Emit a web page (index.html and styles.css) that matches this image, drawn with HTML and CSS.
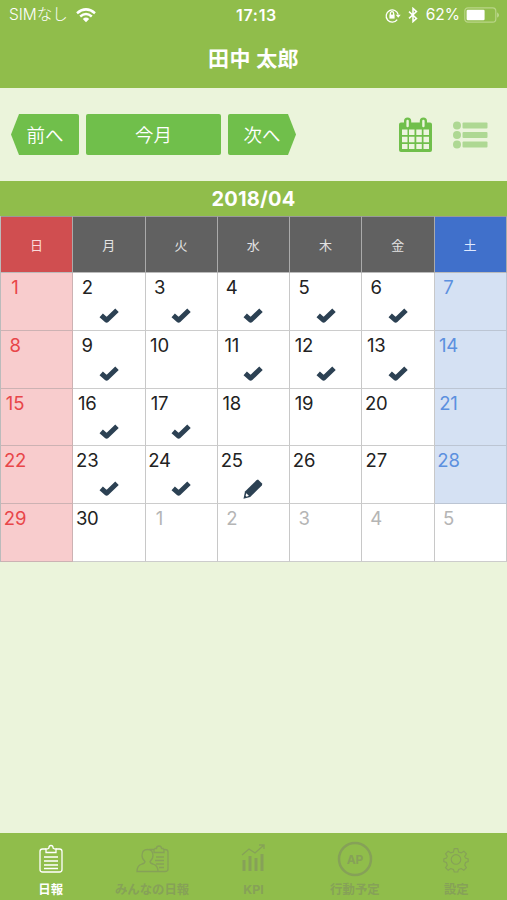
FILE: index.html
```html
<!DOCTYPE html>
<html lang="ja">
<head>
<meta charset="utf-8">
<title>日報</title>
<link rel="stylesheet" href="styles.css">
</head>
<body>
<svg class="defs" width="0" height="0">
  <symbol id="check" viewBox="0 0 20 16"><path d="M2.2 8.300 7.600 13.200 18 3.200" fill="none" stroke="#2c4153" stroke-width="5" stroke-linejoin="round"/></symbol>
  <symbol id="pencil" viewBox="0 0 20 20"><path fill="#2c4153" d="M13.400 1.300 15 .6 19.300 4.800 18.800 6.600 7.200 18.100.5 19.800 2 12.500Z"/><path fill="#fff" d="m3.300 14.300 2.600 2.500-2.300.9-1-1Z"/></symbol>
</svg>
<div class="app">
  <header class="header">
    <div class="status">
      <div class="carrier"><span>SIMなし</span>
        <svg width="20" height="15" viewBox="0 0 20 15" fill="none" stroke="#fff" stroke-width="2.500"><path d="M1 5.200Q10-2.400 19 5.200M4.200 8.500Q10 3.600 15.800 8.500"/><path d="M6.800 10.900Q10 8.300 13.200 10.900L10 14.200Z" fill="#fff" stroke="none"/></svg>
      </div>
      <div class="time">17:13</div>
      <div class="indicators">
        <svg width="16" height="15" viewBox="0 0 16 15" fill="none" stroke="#fff" stroke-width="1.300"><path d="M12.200 11.600A6.100 6.100 0 1 1 13.200 6.600"/><path d="M10.700 6.700h5l-2.500 3.100Z" fill="#fff" stroke="none"/><path d="M4.400 6.600h5.200v4H4.400Z" fill="#fff" stroke="none"/><path d="M5.400 7V5.300a1.600 1.600 0 0 1 3.200 0V7"/></svg>
        <svg class="bluetooth" width="10" height="16" viewBox="0 0 10 16" fill="none" stroke="#fff" stroke-width="1.500"><path d="m1 4.600 7.500 6.800L5 14.600V1.400l3.500 3.200L1 11.400"/></svg>
        <span>62%</span>
        <svg class="battery" width="36" height="16" viewBox="0 0 36 16"><rect x=".8" y=".8" width="31" height="14.400" rx="3.200" fill="none" stroke="#b9d588" stroke-width="1.200"/><rect x="2.600" y="2.800" width="18" height="10.400" rx="1.200" fill="#fff"/><path d="M33.300 5.200q3 2.800 0 5.600Z" fill="#c9dfa2"/></svg>
      </div>
    </div>
    <h1 class="title">田中 太郎</h1>
  </header>
  <div class="toolbar">
    <button class="button prev">前へ</button>
    <button class="button current">今月</button>
    <button class="button next">次へ</button>
    <svg class="calendar-icon" width="33" height="35" viewBox="0 0 33 35"><path fill="#70bf4b" fill-rule="evenodd" d="M2 5.500h3V4a3.600 3.600 0 0 1 7.200 0v1.500h8.600V4A3.600 3.600 0 0 1 28 4v1.500h3q2 0 2 2V33q0 2-2 2H2q-2 0-2-2V7.500q0-2 2-2Z"/><g stroke="#edf5de" stroke-width="2.400" stroke-linecap="round"><path d="M8.600 4v5M24.400 4v5"/></g><path fill="#edf5de" d="M3 12.500h5.500v5.500H3zM10 12.500h5.500v5.500H10zM17.300 12.500h5.500v5.500h-5.500zM24.500 12.500H30v5.500h-5.500zM3 19.800h5.500v5.500H3zM10 19.800h5.500v5.500H10zM17.300 19.800h5.500v5.500h-5.500zM24.500 19.800H30v5.500h-5.500zM3 27h5.500v5H3zM10 27h5.500v5H10zM17.300 27h5.500v5h-5.500zM24.500 27H30v5h-5.500z"/></svg>
    <svg class="list-icon" width="35" height="28" viewBox="0 0 35 28" fill="#aed893"><circle cx="4" cy="4.500" r="4"/><circle cx="4" cy="14" r="4"/><circle cx="4" cy="23.500" r="4"/><rect x="9.500" y="1.500" width="25" height="6" rx="1"/><rect x="9.500" y="11" width="25" height="6" rx="1"/><rect x="9.500" y="20.500" width="25" height="6" rx="1"/></svg>
  </div>
  <div class="month">2018/04</div>
  <div class="calendar">
    <div class="day sun">日</div><div class="day">月</div><div class="day">火</div><div class="day">水</div><div class="day">木</div><div class="day">金</div><div class="day sat">土</div>
    <div class="cell sun"><span>1</span></div>
    <div class="cell"><span>2</span><svg class="check"><use href="#check"/></svg></div>
    <div class="cell"><span>3</span><svg class="check"><use href="#check"/></svg></div>
    <div class="cell"><span>4</span><svg class="check"><use href="#check"/></svg></div>
    <div class="cell"><span>5</span><svg class="check"><use href="#check"/></svg></div>
    <div class="cell"><span>6</span><svg class="check"><use href="#check"/></svg></div>
    <div class="cell sat"><span>7</span></div>
    <div class="cell sun"><span>8</span></div>
    <div class="cell"><span>9</span><svg class="check"><use href="#check"/></svg></div>
    <div class="cell"><span>10</span></div>
    <div class="cell"><span>11</span><svg class="check"><use href="#check"/></svg></div>
    <div class="cell"><span>12</span><svg class="check"><use href="#check"/></svg></div>
    <div class="cell"><span>13</span><svg class="check"><use href="#check"/></svg></div>
    <div class="cell sat"><span>14</span></div>
    <div class="cell sun"><span>15</span></div>
    <div class="cell"><span>16</span><svg class="check"><use href="#check"/></svg></div>
    <div class="cell"><span>17</span><svg class="check"><use href="#check"/></svg></div>
    <div class="cell"><span>18</span></div>
    <div class="cell"><span>19</span></div>
    <div class="cell"><span>20</span></div>
    <div class="cell sat"><span>21</span></div>
    <div class="cell sun"><span>22</span></div>
    <div class="cell"><span>23</span><svg class="check"><use href="#check"/></svg></div>
    <div class="cell"><span>24</span><svg class="check"><use href="#check"/></svg></div>
    <div class="cell"><span>25</span><svg class="pencil"><use href="#pencil"/></svg></div>
    <div class="cell"><span>26</span></div>
    <div class="cell"><span>27</span></div>
    <div class="cell sat"><span>28</span></div>
    <div class="cell sun"><span>29</span></div>
    <div class="cell"><span>30</span></div>
    <div class="cell other"><span>1</span></div>
    <div class="cell other"><span>2</span></div>
    <div class="cell other"><span>3</span></div>
    <div class="cell other"><span>4</span></div>
    <div class="cell other"><span>5</span></div>
  </div>
  <nav class="tabs">
    <div class="tab active">
      <svg width="36" height="36" viewBox="0 0 36 36"><path d="M13 8h-3.500Q7 8 7 10.500v18Q7 31 9.500 31h17q2.500 0 2.500-2.500v-18Q29 8 26.500 8H23"/><path d="M13 11.500V8q3 0 3-1.500a2 2 0 0 1 4 0Q20 8 23 8v3.500ZM11 16h14M11 20h14M11 24h14M11 27.500h14"/></svg>
      <span>日報</span>
    </div>
    <div class="tab">
      <svg width="36" height="36" viewBox="0 0 36 36"><path d="M15 8.500h4q1.500 0 2-1h1.500q0-2.500 2.500-2.500t2.500 2.500H29q0 1 2 1 3 0 3 2.500v17q0 2.500-3 2.500H3q0-6 5-7.500 3-.7 3-2.500-3-2.500-3-6 0-6 5.500-6T19 14.500q0 3.500-3 6 0 1.800 3 2.500 5 1.500 5 7.500"/><path d="M20 8.500v3h10v-3M22 16h8M21 19.500h9M22 23h8M25 26.500h5"/></svg>
      <span>みんなの日報</span>
    </div>
    <div class="tab">
      <svg width="36" height="36" viewBox="0 0 36 36"><path class="bars" d="M9 30V19M15 30V15M21 30V17M27 30V13"/><path d="m7 14 7-6 6 4 9-8m-5 0h5v4"/></svg>
      <span>KPI</span>
    </div>
    <div class="tab">
      <svg width="36" height="36" viewBox="0 0 36 36"><circle class="ring" cx="18" cy="18" r="16"/><text x="18" y="22.500" text-anchor="middle">AP</text></svg>
      <span>行動予定</span>
    </div>
    <div class="tab">
      <svg class="gear" width="36" height="36" viewBox="0 0 36 36"><path d="m16 6 4 0 1 4 3 1 3-2 3 3-2 3 1 2 3 1v3l-3 1-1 3 2 3-3 3-3-2-3 1-1 3h-4l-1-3-3-1-3 2-3-3 2-3-1-3-3-1v-3l3-1 1-2-2-3 3-3 3 2 3-1Z"/><circle cx="18" cy="18.500" r="5.500"/></svg>
      <span>設定</span>
    </div>
  </nav>
</div>
</body>
</html>
```
FILE: styles.css
```css
* { box-sizing: border-box; }
body { margin: 0; font-family: Inter, "Noto Sans CJK JP", sans-serif; }
.defs { display: block; height: 0; }
.app { width: 507px; height: 900px; display: flex; flex-direction: column; background: #ebf4db; overflow: hidden; }
.header { height: 88px; flex: none; background: #90bd4b; color: #fff; }
.status { height: 30px; display: grid; grid-template-columns: 1fr 60px 1fr; align-items: center; font-size: 16px; line-height: 30px; }
.status svg { display: block; flex: none; }
.carrier { display: flex; align-items: center; gap: 9px; padding-left: 9px; font-weight: 300; }
.carrier span { width: 58px; white-space: nowrap; font-size: 15.5px; }
.time { text-align: center; font-weight: 600; font-size: 16px; letter-spacing: .7px; padding-left: 6px; }
.indicators { display: flex; align-items: center; justify-content: flex-end; padding-right: 7px; }
.bluetooth { margin: 0 8px 0 7px; }
.indicators span { font-size: 15.5px; }
.battery { margin-left: 4px; }
.title { margin: 0; text-align: center; font-size: 21px; letter-spacing: .4px; line-height: 57px; font-weight: 700; }
.toolbar { height: 93px; flex: none; display: flex; align-items: center; padding-left: 11px; }
.button { height: 41px; border: 0; border-radius: 2px; padding: 0; background: #70bf4b; color: #fff; font: 350 18.5px/41px "Noto Sans CJK JP", sans-serif; }
.prev { width: 68px; clip-path: polygon(8px 0, 100% 0, 100% 100%, 8px 100%, 0 50%); }
.current { width: 135px; margin: 0 7px; }
.next { width: 68px; clip-path: polygon(0 0, 60px 0, 100% 50%, 60px 100%, 0 100%); }
.calendar-icon { margin-left: 103px; }
.list-icon { margin-left: 21px; }
.month { height: 35px; flex: none; background: #90bd4b; color: #fff; text-align: center; font-weight: 700; font-size: 20px; letter-spacing: .2px; line-height: 36px; }
.calendar { flex: none; display: grid; grid-template-columns: repeat(7, 72.25px); grid-template-rows: 57px repeat(5, 57.75px); border-left: 1px solid #bbb; background: #fff; }
.day { display: flex; align-items: center; justify-content: center; background: #616161; color: #e3e3e3; font-size: 13px; border-right: 1px solid #aaa; border-bottom: 1px solid #bbb; border-top: 1px solid #999; }
.day.sun { background: #d04e50; color: #fbdada; }
.day.sat { background: #4070cb; color: #dfe9ff; }
.cell { display: flex; flex-direction: column; align-items: center; border-right: 1px solid #c8c8c8; border-bottom: 1px solid #ccc; color: #222; }
.cell span { align-self: flex-start; width: 28px; text-align: center; font-size: 18.5px; letter-spacing: -.2px; line-height: 29px; height: 34px; }
.cell.sun { background: #f8cccd; color: #e84649; border-color: #ccb2b3; }
.cell.sat { background: #d5e1f3; color: #5c90df; border-color: #bcc5d3; }
.cell.other { color: #b5b5b5; }
.check { width: 20px; height: 16px; flex: none; }
.pencil { width: 20px; height: 20px; flex: none; margin-top: -1px; }
.tabs { height: 67px; flex: none; margin-top: auto; display: grid; grid-template-columns: repeat(5, 1fr); background: #90bd4b; }
.tab { display: flex; flex-direction: column; align-items: center; padding-top: 8px; color: #86a158; font-size: 12.4px; font-weight: 700; line-height: 17px; }
.tab svg { display: block; flex: none; fill: none; stroke: currentColor; stroke-width: 1.3; margin-bottom: 4px; }
.tab span { white-space: nowrap; }
.tab .gear { transform: scale(.87); }
.tab .bars { stroke-width: 3; }
.tab .ring { stroke-width: 2.5; }
.tab text { fill: currentColor; stroke: none; font: 700 12px Inter, sans-serif; }
.tab.active { color: #fff; }
```
